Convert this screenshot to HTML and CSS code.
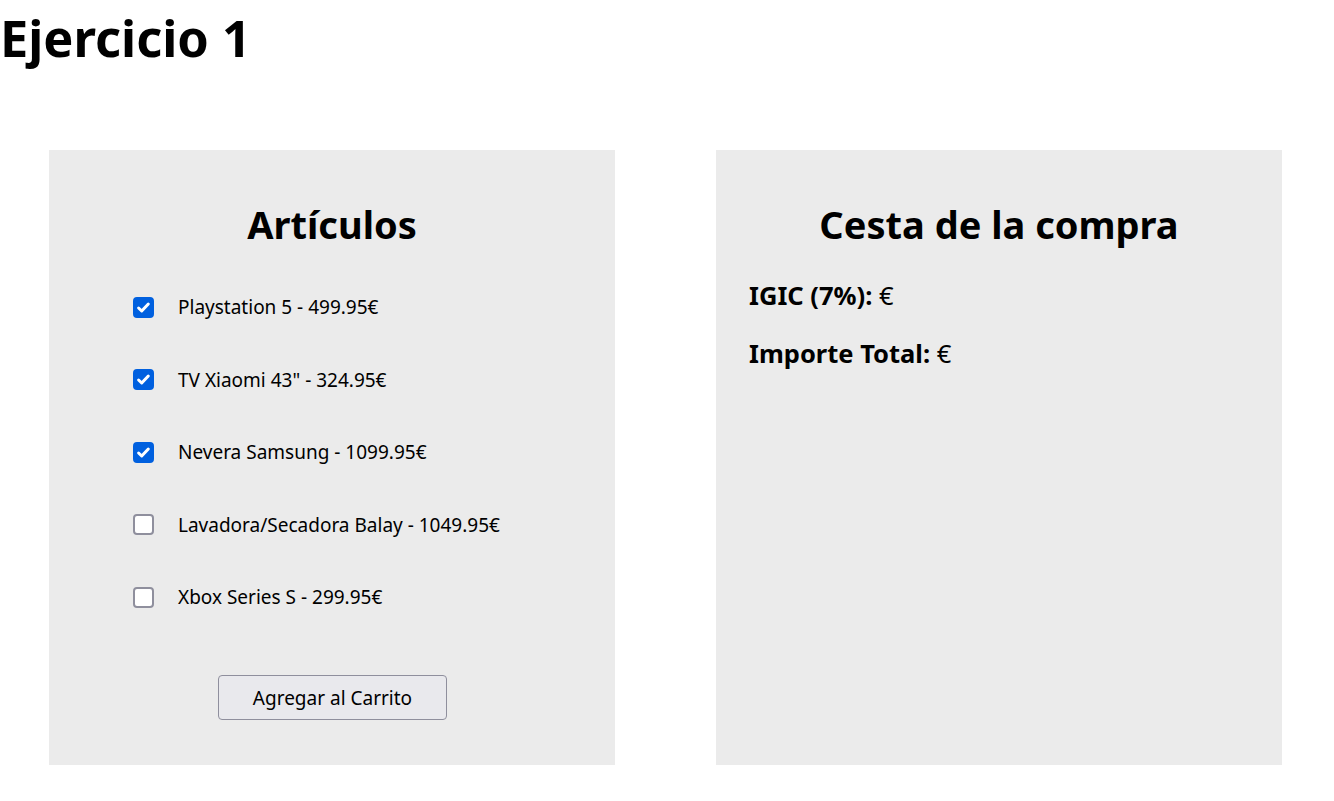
FILE: index.html
```html
<!DOCTYPE html>
<html lang="es">
<head>
<meta charset="utf-8">
<title>Ejercicio 1</title>
<link rel="stylesheet" href="styles.css">
</head>
<body>
<h1 class="title">Ejercicio 1</h1>
<main class="layout">
  <section class="panel panel-items">
    <h2 class="panel-title">Artículos</h2>
    <ul class="items">
      <li><label class="item"><input class="cb" type="checkbox" checked><span>Playstation 5 - 499.95€</span></label></li>
      <li><label class="item"><input class="cb" type="checkbox" checked><span>TV Xiaomi 43" - 324.95€</span></label></li>
      <li><label class="item"><input class="cb" type="checkbox" checked><span>Nevera Samsung - 1099.95€</span></label></li>
      <li><label class="item"><input class="cb" type="checkbox"><span>Lavadora/Secadora Balay - 1049.95€</span></label></li>
      <li><label class="item"><input class="cb" type="checkbox"><span>Xbox Series S - 299.95€</span></label></li>
    </ul>
    <div class="actions"><button class="btn" type="button">Agregar al Carrito</button></div>
  </section>
  <section class="panel panel-cart">
    <h2 class="panel-title">Cesta de la compra</h2>
    <p class="line"><strong>IGIC (7%):</strong> €</p>
    <p class="line"><strong>Importe Total:</strong> €</p>
  </section>
</main>
</body>
</html>
```
FILE: styles.css
```css
* { box-sizing: border-box; }
body {
  margin: 0;
  font-family: "Noto Sans", "Open Sans", sans-serif;
  color: #000;
  background: #fff;
}
.title {
  margin: 0;
  padding-top: 2px;
  font-size: 50.5px;
  line-height: 72px;
  font-weight: 700;
}
.layout {
  display: flex;
  gap: 101px;
  padding-left: 49px;
  margin-top: 76px;
}
.panel {
  width: 566px;
  height: 615px;
  background: #ebebeb;
}
.panel-title {
  margin: 0;
  text-align: center;
  font-size: 38px;
  line-height: 48px;
  font-weight: 700;
  padding-top: 50px;
}
.items {
  list-style: none;
  margin: 0;
  padding: 48px 0 0 84px;
  display: flex;
  flex-direction: column;
  gap: 50.5px;
}
.item {
  display: flex;
  align-items: center;
  gap: 24px;
  font-size: 19px;
  line-height: 22px;
}
.cb {
  appearance: none;
  -webkit-appearance: none;
  margin: 0;
  width: 21px;
  height: 21px;
  border: 2px solid #8f8f9d;
  border-radius: 4px;
  background: #fff;
  flex: none;
}
.cb:checked {
  border-color: #0060df;
  background: #0060df url("data:image/svg+xml,%3Csvg xmlns='http://www.w3.org/2000/svg' viewBox='0 0 17 17'%3E%3Cpath d='M3.6 9l3.1 3 6.6-7' fill='none' stroke='%23fff' stroke-width='3' stroke-linecap='round' stroke-linejoin='round'/%3E%3C/svg%3E") center/100% no-repeat;
}
.actions {
  display: flex;
  justify-content: center;
  margin-top: 67px;
}
.btn {
  width: 229px;
  height: 45px;
  font-family: inherit;
  font-size: 19px;
  color: #000;
  background: #e9e9ed;
  border: 1px solid #8f8f9d;
  border-radius: 4px;
  margin-left: 1px;
}
.panel-cart .line {
  margin: 0;
  padding-left: 33px;
  font-size: 25.5px;
  line-height: 32px;
}
.panel-cart .panel-title { margin-bottom: 31px; }
.panel-cart .line + .line { margin-top: 26px; }
```
